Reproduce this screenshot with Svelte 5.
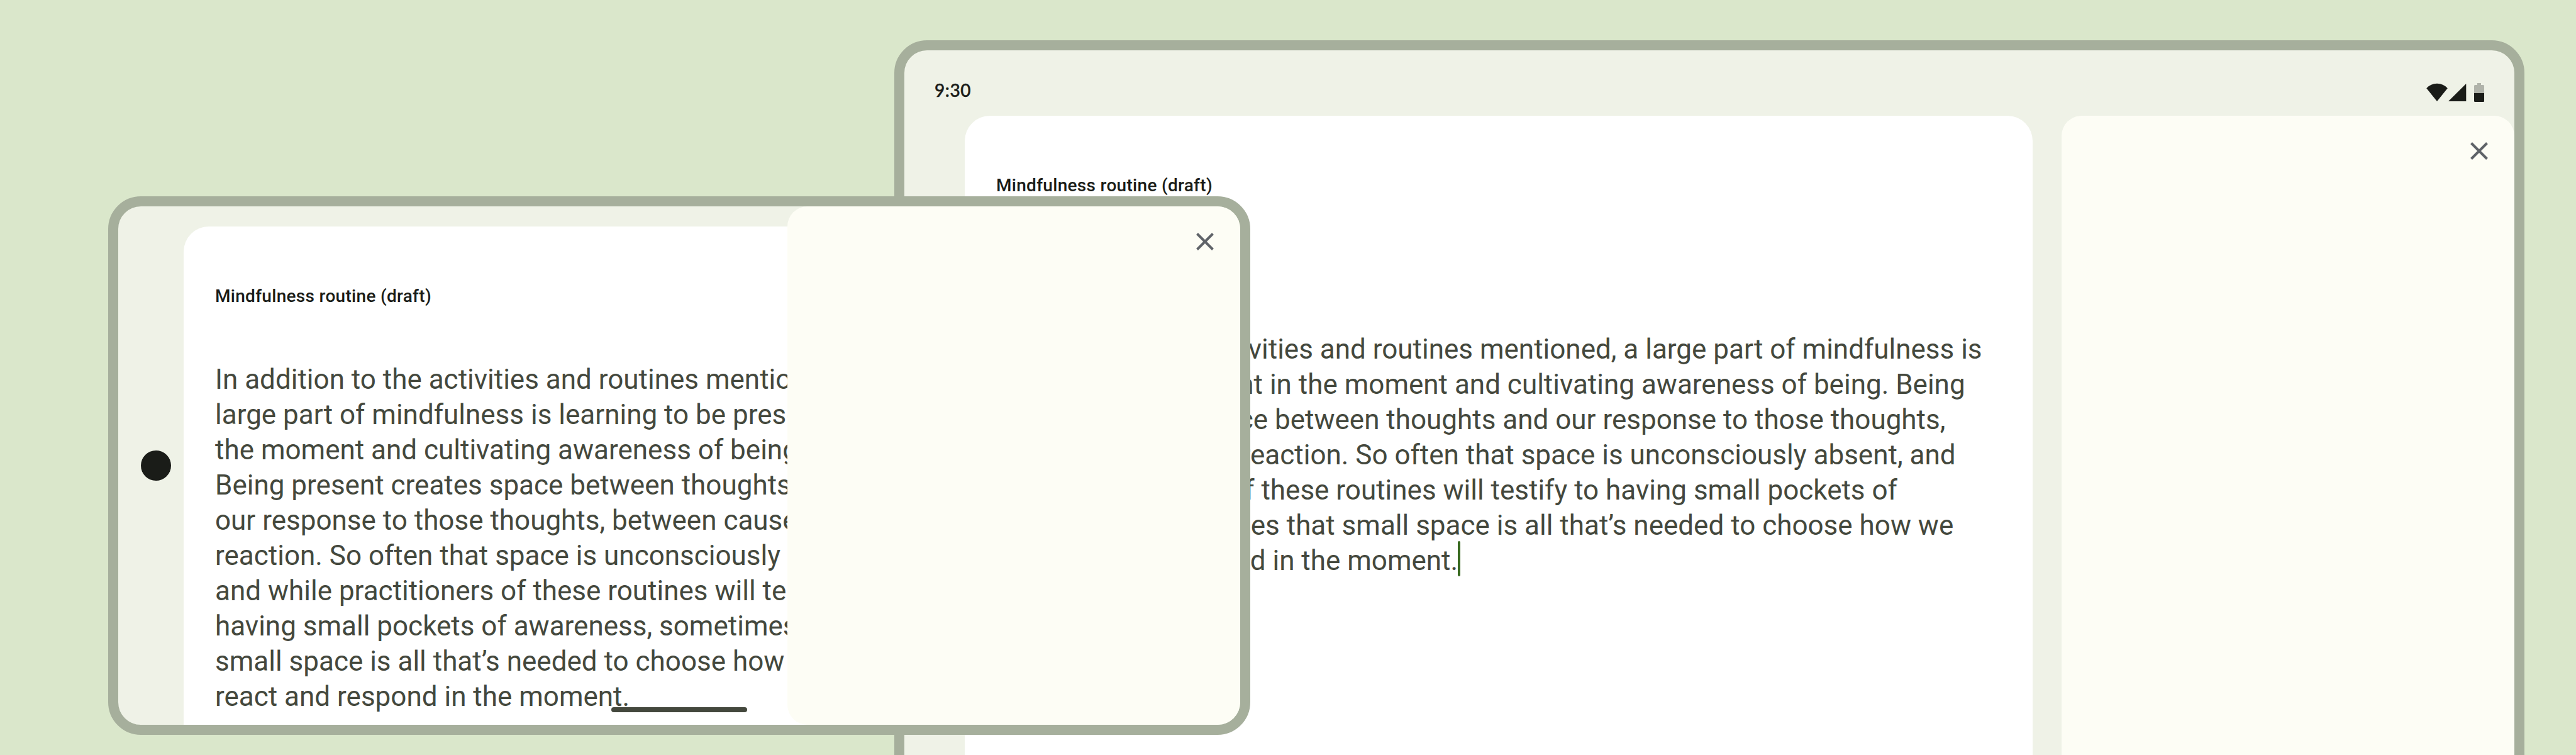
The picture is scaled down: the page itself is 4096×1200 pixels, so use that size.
<script>
  const title = 'Mindfulness routine (draft)';
  const tabletLines = [
    'In addition to the activities and routines mentioned, a large part of mindfulness is',
    'learning to be present in the moment and cultivating awareness of being. Being',
    'present creates space between thoughts and our response to those thoughts,',
    'between cause and reaction. So often that space is unconsciously absent, and',
    'while practitioners of these routines will testify to having small pockets of',
    'awareness, sometimes that small space is all that’s needed to choose how we',
    'react and respond in the moment.'
  ];
  const phoneLines = [
    'In addition to the activities and routines mentioned, a',
    'large part of mindfulness is learning to be present in',
    'the moment and cultivating awareness of being.',
    'Being present creates space between thoughts and',
    'our response to those thoughts, between cause and',
    'reaction. So often that space is unconsciously absent,',
    'and while practitioners of these routines will testify to',
    'having small pockets of awareness, sometimes that',
    'small space is all that’s needed to choose how we',
    'react and respond in the moment.'
  ];
</script>

{#snippet closeIcon()}
  <svg class="close" viewBox="0 0 28 28" width="28" height="28" aria-label="Close">
    <path d="M1.5 1.5 26.5 26.5M26.5 1.5 1.5 26.5" />
  </svg>
{/snippet}

<main class="stage">
  <section class="device tablet">
    <header class="status">
      <span class="time">9:30</span>
      <svg width="94" height="32" viewBox="0 0 94 32" aria-hidden="true">
        <path class="ink" d="M.2 10.200Q7 2.700 17 2.700T33.800 10.200L17 31Z" />
        <path class="ink" d="M35 31 63.300 3V31Z" />
        <path class="faded" d="M81 2h6v3h3.500q1.500 0 1.500 1.500V18H76V6.500Q76 5 77.500 5H81Z" />
        <path class="ink" d="M76 18h16v12.500q0 1.500-1.500 1.500h-13q-1.500 0-1.500-1.500Z" />
      </svg>
    </header>
    <div class="panes">
      <article class="doc">
        <h1>{title}</h1>
        <p>
          {#each tabletLines as line, i}
            <span class="line">{line}{#if i === tabletLines.length - 1}<i class="caret"></i>{/if}</span>
          {/each}
        </p>
      </article>
      <aside class="side">{@render closeIcon()}</aside>
    </div>
  </section>

  <section class="device phone">
    <div class="rail"><span class="camera"></span></div>
    <article class="doc">
      <h1>{title}</h1>
      <p>
        {#each phoneLines as line}
          <span class="line">{line}</span>
        {/each}
      </p>
    </article>
    <aside class="side">{@render closeIcon()}</aside>
    <span class="handle"></span>
  </section>
</main>

<style>
  :global(body) { margin: 0; }
  .stage {
    position: relative;
    width: 4096px;
    height: 1200px;
    overflow: hidden;
    background: #dae7cb;
    font-family: Roboto, sans-serif;
  }
  .device {
    position: absolute;
    box-sizing: border-box;
    border: 16px solid #a6af9c;
    border-radius: 52px;
    background: #eff2e7;
    overflow: hidden;
  }
  .tablet {
    left: 1422px;
    top: 64px;
    width: 2592px;
    height: 1300px;
    display: flex;
    flex-direction: column;
  }
  .phone {
    left: 172px;
    top: 312px;
    width: 1816px;
    height: 856px;
    display: flex;
  }
  .status {
    box-sizing: border-box;
    height: 104px;
    padding: 50px 46px 0 48px;
    display: flex;
    align-items: flex-start;
    justify-content: space-between;
  }
  .time {
    margin-top: -3px;
    font: 500 28px/32px Lato, sans-serif;
    letter-spacing: 0.6px;
    -webkit-text-stroke: 0.5px #1a1c18;
    color: #1a1c18;
  }
  .ink { fill: #1a1c18; }
  .faded { fill: #b0b3aa; }
  .panes {
    flex: 1;
    display: flex;
    gap: 46px;
    padding-left: 96px;
  }
  .doc {
    box-sizing: border-box;
    background: #fff;
    border-radius: 40px;
    padding: 91px 50px 0;
  }
  .tablet .doc { flex: 1; }
  .phone .doc {
    flex: none;
    width: 1640px;
    height: 1000px;
    margin-top: 32px;
  }
  .rail {
    flex: none;
    width: 104px;
    padding-top: 388px;
    box-sizing: border-box;
    display: flex;
    justify-content: center;
  }
  .camera {
    width: 48px;
    height: 48px;
    margin-left: 16px;
    border-radius: 50%;
    background: #1a1c18;
  }
  h1 {
    margin: 0;
    font-size: 28px;
    line-height: 39px;
    font-weight: 500;
    letter-spacing: 0.3px;
    color: #1a1c18;
  }
  p {
    margin: 0;
    font-size: 44px;
    line-height: 56px;
    color: #44483d;
  }
  .tablet p { padding-top: 213px; }
  .phone p { padding-top: 85px; }
  .line { display: block; white-space: nowrap; }
  .tablet .line:first-child { text-indent: -11px; }
  .tablet .line:last-child { text-indent: 75px; }
  .caret {
    display: inline-block;
    width: 4px;
    height: 56px;
    margin-top: -3px;
    vertical-align: top;
    border-radius: 2px;
    background: #386a20;
  }
  .side {
    box-sizing: border-box;
    width: 720px;
    background: #fdfdf5;
    border-radius: 32px;
    padding: 42px;
    display: flex;
    align-items: flex-start;
    justify-content: flex-end;
  }
  .phone .side {
    position: absolute;
    right: 0;
    top: 0;
    bottom: 0;
  }
  .close {
    fill: none;
    stroke: #5f6368;
    stroke-width: 4;
  }
  .handle {
    position: absolute;
    left: 784px;
    bottom: 20px;
    width: 216px;
    height: 8px;
    border-radius: 4px;
    background: #44483d;
  }
</style>
